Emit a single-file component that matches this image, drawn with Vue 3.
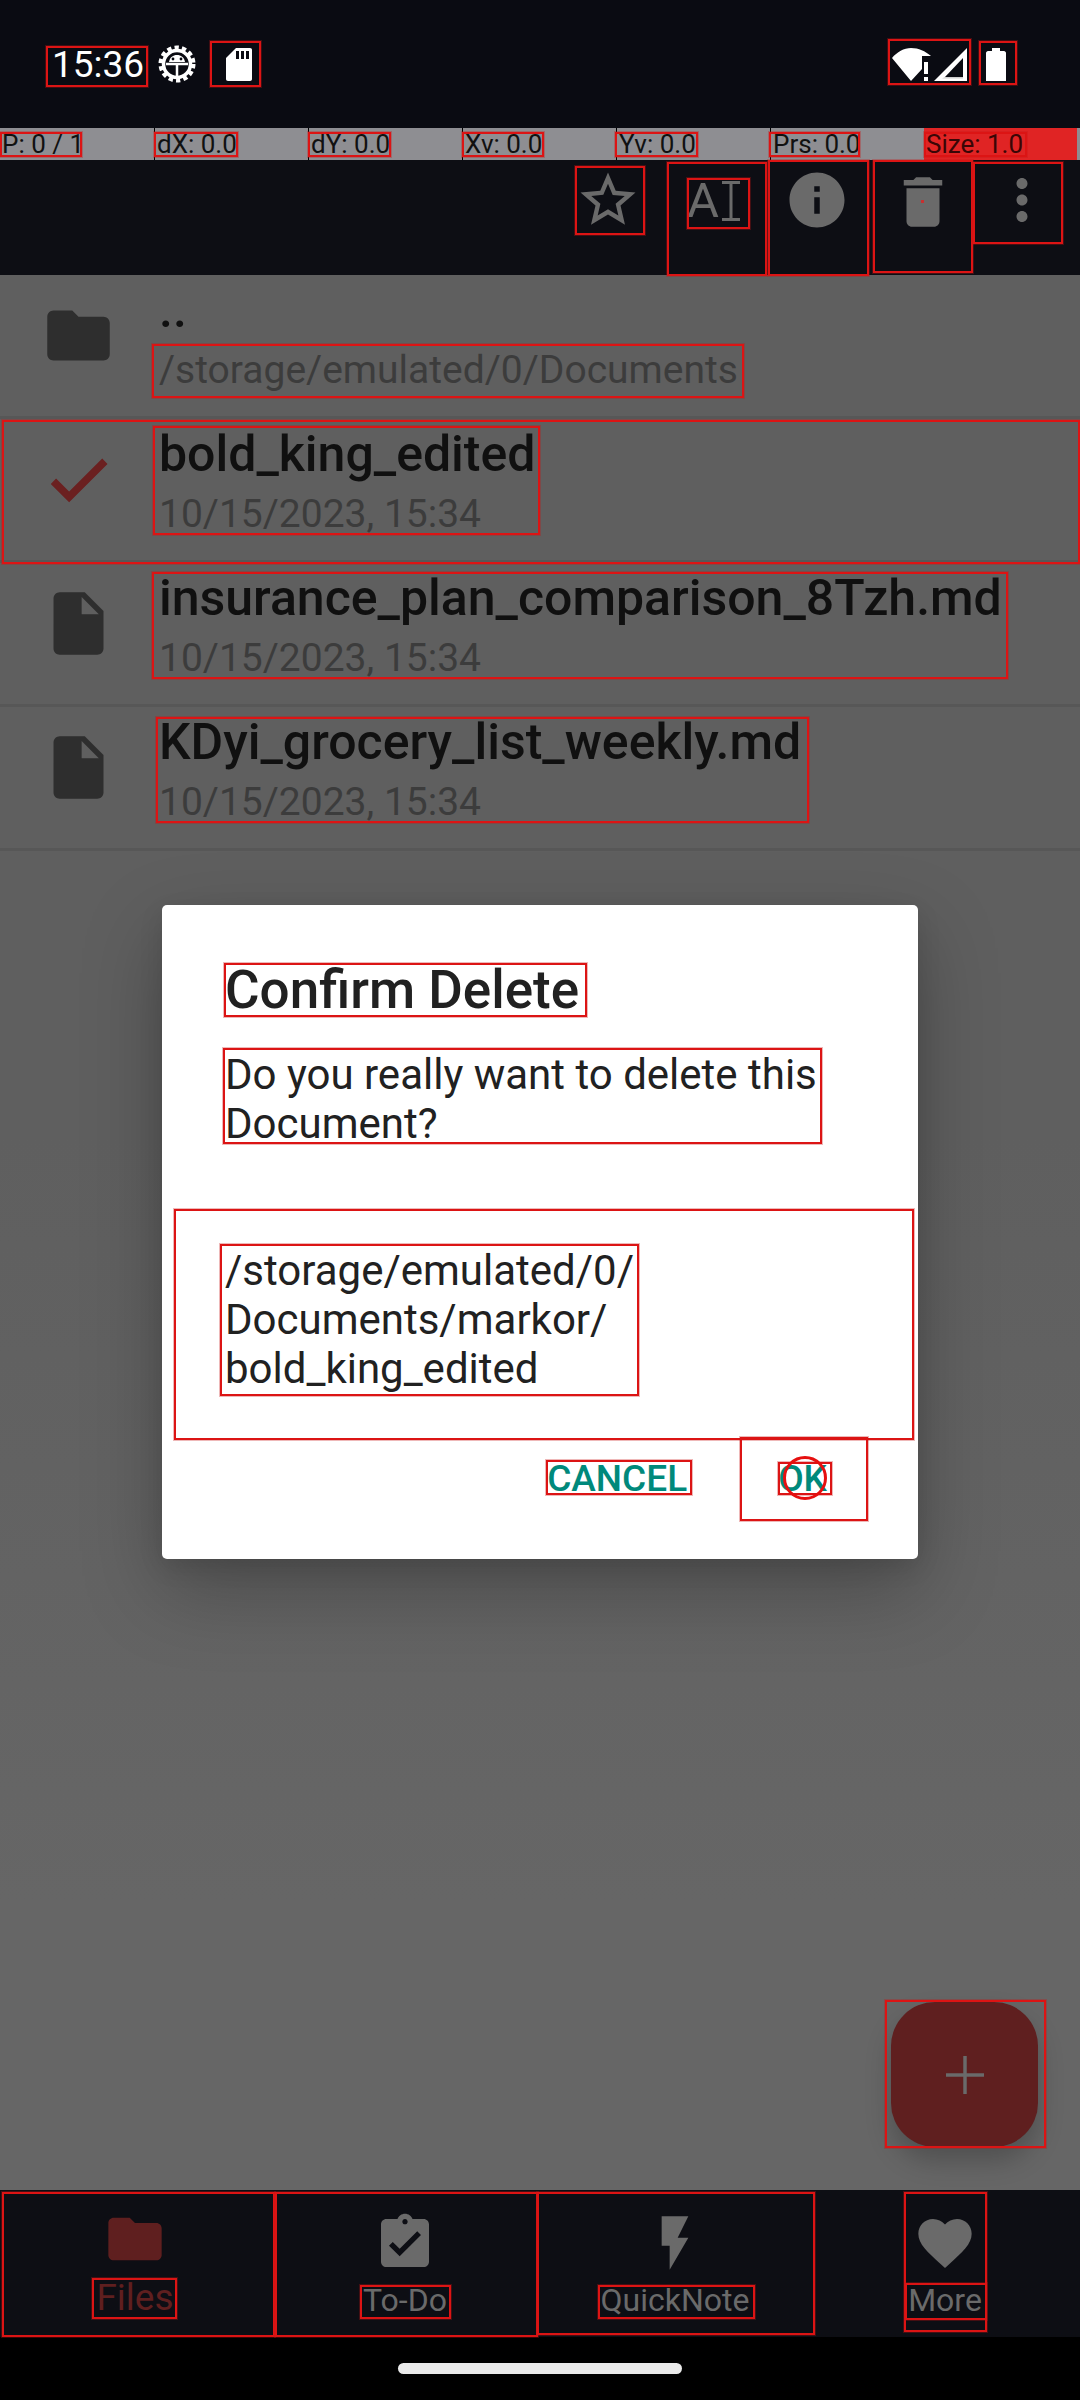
<template>
  <div class="screen">
    <!-- status bar -->
    <div class="status-bar">
      <span class="clock">15:36</span>
      <svg class="gear" viewBox="0 0 38 38">
        <circle cx="19" cy="19" r="16" fill="none" stroke="#fff" stroke-width="5" stroke-dasharray="4.2 3.05" />
        <circle cx="19" cy="19" r="13.5" fill="none" stroke="#fff" stroke-width="3.5" />
        <path d="M8 19h22M19 19v12" stroke="#fff" stroke-width="2.5" />
        <path d="M11 17c1-5 4-7 8-7s7 2 8 7z" fill="#fff" />
        <circle cx="15" cy="14" r="1.4" fill="#0a0b12" />
        <circle cx="23" cy="14" r="1.4" fill="#0a0b12" />
      </svg>
      <svg class="sd" viewBox="0 0 26 33">
        <path d="M10 0h14c1.200 0 2 .8 2 2v29c0 1.200-.8 2-2 2H2c-1.200 0-2-.8-2-2V10z" fill="#fff" />
        <path d="M10 3h3v8h-3zM15 3h3v8h-3zM20 3h3v8h-3z" fill="#0a0b12" />
      </svg>
      <div class="status-right">
        <svg class="wifi" viewBox="0 0 75 33">
          <path d="M0 10C5 4 12 0 19 0c8 0 14 3 20 8h-9v13L19 33z" fill="#fff" />
          <path d="M32 14h4v12h-4zM32 29h4v4h-4z" fill="#fff" />
          <path d="M42 33L75 0v33z" fill="#fff" />
          <path d="M53 29L71 10v19z" fill="#0a0b12" />
          <path d="M53 29h18v1.500H50z" fill="#cfcfcf" />
        </svg>
        <svg class="battery" viewBox="0 0 20 33">
          <path d="M6 0h8v3h4c1 0 2 1 2 2v28H0V5c0-1 1-2 2-2h4z" fill="#fff" />
        </svg>
      </div>
    </div>

    <!-- pointer location bar -->
    <div class="pointer-bar">
      <div v-for="cell in pointerCells" :key="cell" class="pointer-cell" :class="{ 'pointer-cell--hot': cell.startsWith('Size') }">
        {{ cell }}
      </div>
    </div>

    <!-- toolbar -->
    <div class="toolbar">
      <svg class="tool-icon tool-star" viewBox="0 0 24 24"><path :d="icons.star" /></svg>
      <div class="tool-format">
        <span class="format-a">A</span>
        <svg class="format-beam" viewBox="0 0 18 40">
          <path d="M0 1.500h18M0 38.500h18M9 1.500v37" fill="none" stroke="#6a6a6a" stroke-width="3" />
        </svg>
      </div>
      <svg class="tool-icon tool-info" viewBox="0 0 24 24"><path :d="icons.info" /></svg>
      <svg class="tool-icon tool-trash" viewBox="0 0 24 24"><path :d="icons.trash" /></svg>
      <svg class="tool-icon tool-more" viewBox="0 0 24 24"><path :d="icons.more" /></svg>
    </div>

    <!-- file list + dialog -->
    <div class="main">
      <div v-for="row in rows" :key="row.title" class="file-row">
        <div class="file-icon">
          <svg viewBox="0 0 24 24" :class="{ 'icon-check': row.icon === 'check' }"><path :d="icons[row.icon]" /></svg>
        </div>
        <div class="file-text">
          <div class="file-title">{{ row.title }}</div>
          <div class="file-sub">{{ row.sub }}</div>
        </div>
      </div>

      <div class="fab">
        <svg viewBox="0 0 38 38"><path d="M19 0v38M0 19h38" stroke="#6a6a6a" stroke-width="3.500" /></svg>
      </div>

      <div class="dialog">
        <div class="dialog-title">Confirm Delete</div>
        <div class="dialog-message">Do you really want to delete this Document?</div>
        <div class="dialog-path">/storage/emulated/0/<br />Documents/markor/<br />bold_king_edited</div>
        <div class="dialog-actions">
          <span class="dialog-btn">CANCEL</span>
          <span class="dialog-btn dialog-btn--ok">OK</span>
        </div>
      </div>
    </div>

    <!-- bottom nav -->
    <div class="bottom-nav">
      <div v-for="item in navItems" :key="item.label" class="nav-item" :class="{ 'nav-item--active': item.active }">
        <svg viewBox="0 0 24 24"><path :d="icons[item.icon]" /></svg>
        <span>{{ item.label }}</span>
      </div>
    </div>

    <div class="gesture-bar"><div class="gesture-pill"></div></div>

    <!-- highlight boxes drawn over the screenshot -->
    <div v-for="(b, i) in boxes" :key="i" class="mark" :style="boxStyle(b)"></div>
    <div class="tap-dot"></div>
    <div class="trash-dot"></div>
  </div>
</template>

<script setup>
const icons = {
  star: 'M22 9.24l-7.19-.62L12 2 9.19 8.63 2 9.24l5.46 4.73L5.82 21 12 17.27 18.18 21l-1.63-7.03L22 9.24zM12 15.4l-3.76 2.27 1-4.28-3.32-2.88 4.38-.38L12 6.1l1.71 4.04 4.38.38-3.32 2.88 1 4.28L12 15.4z',
  info: 'M12 2C6.48 2 2 6.48 2 12s4.48 10 10 10 10-4.48 10-10S17.52 2 12 2zm1 15h-2v-6h2v6zm0-8h-2V7h2v2z',
  trash: 'M6 19c0 1.1.9 2 2 2h8c1.1 0 2-.9 2-2V7H6v12zM19 4h-3.5l-1-1h-5l-1 1H5v2h14V4z',
  more: 'M12 8c1.1 0 2-.9 2-2s-.9-2-2-2-2 .9-2 2 .9 2 2 2zm0 2c-1.100 0-2 .9-2 2s.9 2 2 2 2-.9 2-2-.9-2-2-2zm0 6c-1.100 0-2 .9-2 2s.9 2 2 2 2-.9 2-2-.9-2-2-2z',
  folder: 'M10 4H4c-1.100 0-1.990.9-1.990 2L2 18c0 1.100.9 2 2 2h16c1.100 0 2-.9 2-2V8c0-1.100-.9-2-2-2h-8l-2-2z',
  file: 'M6 2c-1.100 0-1.990.9-1.990 2L4 20c0 1.100.89 2 1.990 2H18c1.100 0 2-.9 2-2V8l-6-6H6zm7 7V3.500L18.500 9H13z',
  check: 'M9 16.170L4.830 12l-1.420 1.410L9 19 21 7l-1.410-1.410z',
  todo: 'M19 3h-4.180C14.400 1.840 13.300 1 12 1c-1.300 0-2.400.84-2.820 2H5c-1.100 0-2 .9-2 2v14c0 1.100.9 2 2 2h14c1.100 0 2-.9 2-2V5c0-1.100-.9-2-2-2zm-7 0c.55 0 1 .45 1 1s-.45 1-1 1-1-.45-1-1 .45-1 1-1zm-2 14l-4-4 1.410-1.410L10 14.170l6.590-6.590L18 9l-8 8z',
  bolt: 'M7 2v11h3v9l7-12h-4l4-8z',
  heart: 'M12 21.350l-1.450-1.320C5.400 15.360 2 12.280 2 8.500 2 5.420 4.420 3 7.500 3c1.740 0 3.410.81 4.500 2.090C13.090 3.810 14.760 3 16.500 3 19.580 3 22 5.420 22 8.500c0 3.780-3.400 6.860-8.550 11.540L12 21.350z',
};

const pointerCells = ['P: 0 / 1', 'dX: 0.0', 'dY: 0.0', 'Xv: 0.0', 'Yv: 0.0', 'Prs: 0.0', 'Size: 1.0'];

const rows = [
  { icon: 'folder', title: '..', sub: '/storage/emulated/0/Documents' },
  { icon: 'check', title: 'bold_king_edited', sub: '10/15/2023, 15:34' },
  { icon: 'file', title: 'insurance_plan_comparison_8Tzh.md', sub: '10/15/2023, 15:34' },
  { icon: 'file', title: 'KDyi_grocery_list_weekly.md', sub: '10/15/2023, 15:34' },
];

const navItems = [
  { icon: 'folder', label: 'Files', active: true },
  { icon: 'todo', label: 'To-Do' },
  { icon: 'bolt', label: 'QuickNote' },
  { icon: 'heart', label: 'More' },
];

// left, top, right, bottom
const boxes = [
  [46, 46, 148, 87], [210, 41, 261, 87], [888, 39, 971, 85], [979, 41, 1017, 85],
  [0, 132, 82, 157], [154, 132, 238, 157], [308, 132, 391, 157], [462, 132, 544, 157], [615, 132, 698, 157], [769, 132, 860, 157], [924, 132, 1027, 157],
  [575, 166, 645, 235], [667, 162, 767, 276], [687, 178, 750, 229], [768, 160, 869, 276], [873, 160, 973, 273], [973, 162, 1063, 244],
  [152, 344, 744, 398], [2, 420, 1080, 564], [153, 426, 540, 535], [152, 572, 1008, 679], [156, 717, 809, 823],
  [224, 963, 587, 1017], [223, 1048, 822, 1144], [174, 1209, 914, 1440], [220, 1244, 639, 1396], [546, 1460, 692, 1495], [740, 1437, 868, 1521], [778, 1462, 832, 1495],
  [885, 2000, 1046, 2148],
  [2, 2192, 275, 2337], [275, 2192, 538, 2337], [537, 2192, 815, 2335], [904, 2192, 987, 2332],
  [92, 2278, 177, 2319], [360, 2285, 451, 2319], [598, 2285, 755, 2319], [905, 2283, 987, 2320],
];

const boxStyle = ([l, t, r, b]) => ({
  left: l + 'px',
  top: t + 'px',
  width: r - l + 'px',
  height: b - t + 'px',
});
</script>

<style>
html, body {
  margin: 0;
  background: #000;
}
</style>

<style scoped>
.screen {
  position: relative;
  width: 1080px;
  height: 2400px;
  overflow: hidden;
  display: flex;
  flex-direction: column;
  font-family: Roboto, "Liberation Sans", sans-serif;
}

.status-bar {
  height: 128px;
  flex: none;
  background: #0a0b12;
  display: flex;
  align-items: center;
  padding: 0 74px 0 52px;
  box-sizing: border-box;
}
.clock {
  color: #fff;
  font-size: 37px;
  line-height: 1;
}
.gear {
  width: 38px;
  height: 38px;
  margin-left: 14px;
}
.sd {
  width: 26px;
  height: 33px;
  margin-left: 30px;
}
.status-right {
  margin-left: auto;
  display: flex;
  align-items: center;
  gap: 19px;
}
.wifi {
  width: 75px;
  height: 33px;
}
.battery {
  width: 20px;
  height: 33px;
}

.pointer-bar {
  height: 32px;
  flex: none;
  display: flex;
  background: #8e8e92;
  padding-right: 3px;
}
.pointer-cell {
  width: 154px;
  box-sizing: border-box;
  border-left: 1px solid #000;
  padding-left: 2px;
  font-size: 26px;
  line-height: 32px;
  color: #111;
  white-space: nowrap;
}
.pointer-cell:first-child {
  border-left: none;
}
.pointer-cell--hot {
  flex: 1;
  background: #e02424;
  color: #3a0606;
  border-left: none;
}

.toolbar {
  height: 115px;
  flex: none;
  background: #0d0e14;
  position: relative;
}
.tool-icon {
  position: absolute;
  top: 7px;
  width: 66px;
  height: 66px;
  fill: #6a6a6a;
}
.tool-star { left: 575px; }
.tool-info { left: 784px; }
.tool-trash { left: 890px; top: 9px; }
.tool-more { left: 989px; }
.tool-format {
  position: absolute;
  left: 687px;
  top: 16px;
  display: flex;
  align-items: center;
  color: #6a6a6a;
}
.format-a {
  font-size: 49px;
  line-height: 50px;
}
.format-beam {
  width: 18px;
  height: 40px;
  margin-left: 3px;
}

.main {
  position: relative;
  flex: 1;
  background: linear-gradient(#5f5f5f 0, #5f5f5f 45%, #666 85%);
}
.file-row {
  height: 144px;
  box-sizing: border-box;
  border-bottom: 3px solid #575757;
  display: flex;
}
.file-icon {
  width: 159px;
  flex: none;
  display: flex;
  align-items: center;
  justify-content: center;
  padding: 0 2px 21px 0;
  box-sizing: border-box;
}
.file-icon svg {
  width: 75px;
  height: 75px;
  fill: #2e2e2e;
}
.file-icon svg.icon-check {
  fill: #6b2020;
  stroke: #6b2020;
  stroke-width: 0.4;
}
.file-text {
  padding-top: 5px;
}
.file-title {
  font-size: 50px;
  font-weight: 500;
  line-height: 60px;
  color: #101010;
  white-space: nowrap;
}
.file-sub {
  font-size: 39px;
  line-height: 46px;
  margin-top: 7px;
  color: #3c3c3c;
  white-space: nowrap;
}

.fab {
  position: absolute;
  left: 891px;
  top: 1727px;
  width: 147px;
  height: 145px;
  border-radius: 44px;
  background: #5f1f1f;
  box-shadow: 0 14px 26px rgba(0, 0, 0, 0.22);
  display: flex;
  align-items: center;
  justify-content: center;
}
.fab svg {
  width: 38px;
  height: 38px;
}

.dialog {
  position: absolute;
  left: 162px;
  top: 630px;
  width: 756px;
  height: 654px;
  box-sizing: border-box;
  padding: 53px 62px 0 63px;
  background: #fff;
  border-radius: 5px;
  box-shadow: 0 30px 80px rgba(0, 0, 0, 0.26), 0 8px 24px rgba(0, 0, 0, 0.1);
  color: #212121;
}
.dialog-title {
  font-size: 53px;
  font-weight: 500;
  line-height: 64px;
  white-space: nowrap;
}
.dialog-message {
  font-size: 42px;
  line-height: 49px;
  margin-top: 28px;
}
.dialog-path {
  font-size: 42px;
  line-height: 49px;
  margin-top: 98px;
}
.dialog-actions {
  display: flex;
  justify-content: flex-end;
  align-items: center;
  margin-top: 64px;
  margin-right: -12px;
}
.dialog-btn {
  font-size: 37px;
  font-weight: 500;
  line-height: 44px;
  color: #00897b;
}
.dialog-btn--ok {
  margin-left: 91px;
  margin-right: 41px;
}

.bottom-nav {
  height: 147px;
  flex: none;
  background: #0d0e14;
  display: grid;
  grid-template-columns: repeat(4, 270px);
}
.nav-item {
  display: flex;
  flex-direction: column;
  align-items: center;
  color: #6a6a6a;
  font-size: 32px;
  line-height: 40px;
  padding-top: 21px;
}
.nav-item svg {
  width: 64px;
  height: 64px;
  fill: #6a6a6a;
  margin-bottom: 5px;
}
.nav-item--active {
  color: #5f1f1f;
  font-size: 37px;
  padding-top: 17px;
}
.nav-item--active svg {
  fill: #5f1f1f;
  margin-bottom: 7px;
}

.gesture-bar {
  height: 63px;
  flex: none;
  background: #000;
  display: flex;
  justify-content: center;
  padding-top: 26px;
  box-sizing: border-box;
}
.gesture-pill {
  width: 284px;
  height: 11px;
  border-radius: 6px;
  background: #eaeaea;
}

.mark {
  position: absolute;
  box-sizing: border-box;
  border: 2px solid #dc1414;
  box-shadow: 0 0 0 1px rgba(200, 20, 20, 0.3);
  pointer-events: none;
}
.tap-dot {
  position: absolute;
  left: 783px;
  top: 1456px;
  width: 44px;
  height: 44px;
  box-sizing: border-box;
  border: 3px solid #e60f0f;
  border-radius: 50%;
}
.trash-dot {
  position: absolute;
  left: 921px;
  top: 200px;
  width: 3px;
  height: 3px;
  background: #c83030;
}
</style>
